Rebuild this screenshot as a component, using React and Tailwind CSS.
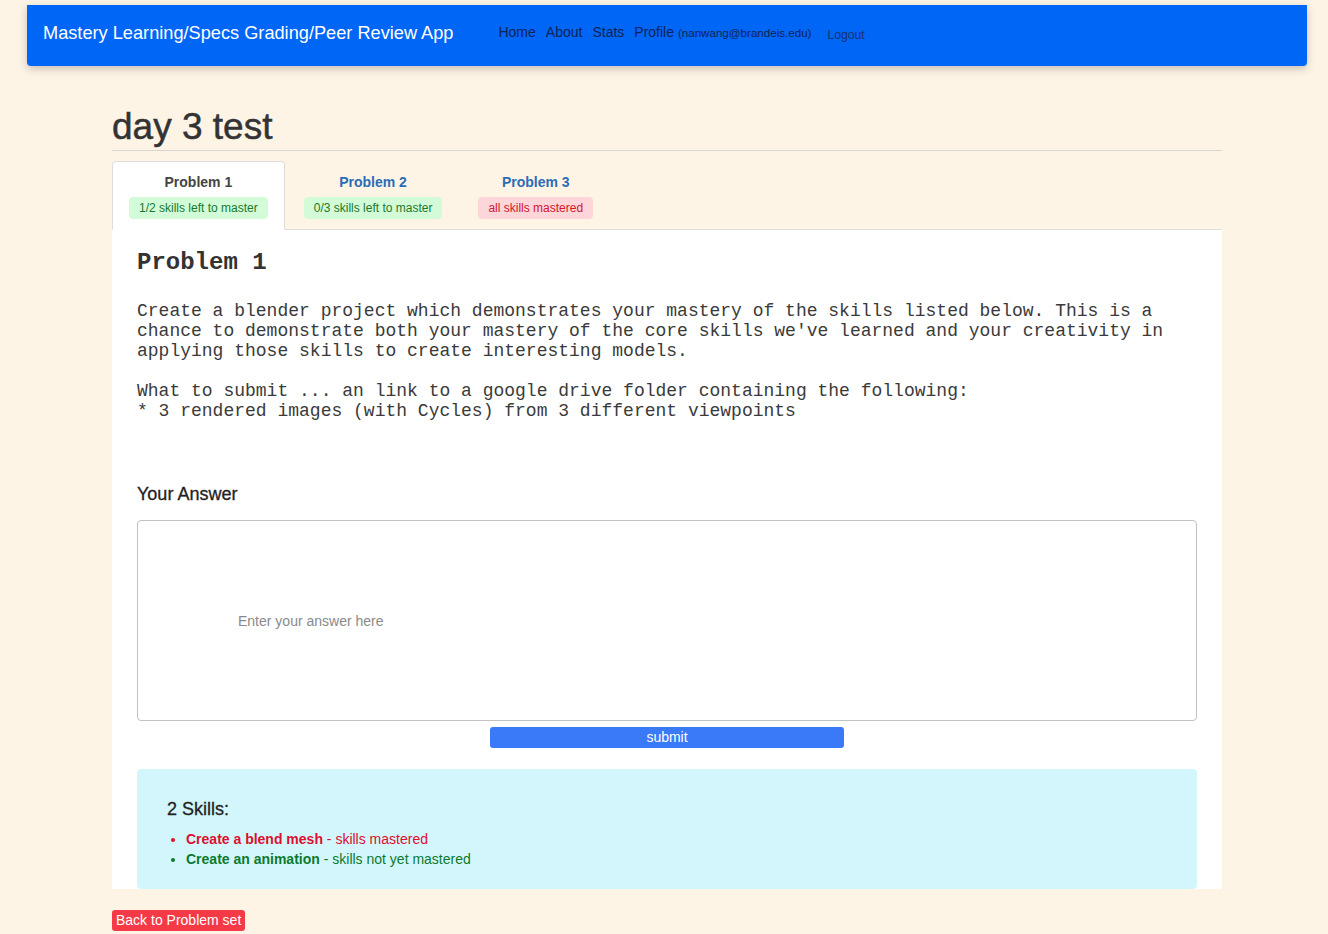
import React from "react";

const sans = { fontFamily: '"Liberation Sans", Arial, sans-serif' };
const mono = { fontFamily: '"Liberation Mono", "Courier New", monospace' };

function Tab({ label, badge, active, tone }) {
  const badgeCls =
    tone === "red"
      ? "bg-[#fdd6da] text-[#d3152b]"
      : "bg-[#d3fbd8] text-[#187a2c]";
  return (
    <div
      className={
        "flex flex-col items-center px-4 pt-[10px] h-[69px] mr-[2px] -mb-px rounded-t-[4px] border " +
        (active
          ? "bg-white border-[#dddddd] border-b-white"
          : "border-transparent")
      }
    >
      <div
        className={
          "text-[14px] leading-[20px] font-bold " +
          (active ? "text-[#444444]" : "text-[#2b6db5]")
        }
      >
        {label}
      </div>
      <div
        className={
          "mt-[5px] h-[22px] flex items-center px-[10px] rounded-[4px] text-[12px] " +
          badgeCls
        }
      >
        {badge}
      </div>
    </div>
  );
}

export default function App() {
  return (
    <div className="min-h-[934px] bg-[#fef4e6] pt-[5px] pb-[4px]" style={sans}>
      <nav className="ml-[27px] w-[1280px] h-[61px] bg-[#0066f5] rounded-b-[4px] shadow-[0_3px_8px_rgba(0,0,0,0.22)] flex items-center pl-[16px]">
        <div className="text-white text-[18.2px] leading-none -mt-[4px]">
          Mastery Learning/Specs Grading/Peer Review App
        </div>
        <div className="ml-[45px] flex items-center gap-[10px] text-[14px] text-[#0f2356] -mt-[6px]">
          <span>Home</span>
          <span>About</span>
          <span>Stats</span>
          <span>
            Profile{" "}
            <span className="text-[11.6px]">(nanwang@brandeis.edu)</span>
          </span>
          <span className="ml-[6px] text-[12.2px] text-[#18326e] mt-[6px]">
            Logout
          </span>
        </div>
      </nav>

      <div className="ml-[112px] w-[1110px]">
        <h1 className="mt-[39px] text-[37px] leading-[44px] font-medium text-[#333333] [-webkit-text-stroke:0.5px_#333333]">
          day 3 test
        </h1>
        <div className="mt-[1px] border-t border-[#d9d5cf]" />

        <div className="mt-[10px] flex border-b border-[#dddddd]">
          <Tab label="Problem 1" badge="1/2 skills left to master" active />
          <Tab label="Problem 2" badge="0/3 skills left to master" />
          <Tab label="Problem 3" badge="all skills mastered" tone="red" />
        </div>

        <div className="bg-white px-[25px] pt-[19px]">
          <h3 className="text-[24px] leading-[28px] font-bold text-[#333333]" style={mono}>
            Problem 1
          </h3>
          <div
            className="mt-[24px] text-[18px] leading-[20px] text-[#3a3a3a] whitespace-pre"
            style={mono}
          >
            {"Create a blender project which demonstrates your mastery of the skills listed below. This is a\nchance to demonstrate both your mastery of the core skills we've learned and your creativity in\napplying those skills to create interesting models.\n\nWhat to submit ... an link to a google drive folder containing the following:\n* 3 rendered images (with Cycles) from 3 different viewpoints"}
          </div>

          <div className="mt-[61px] text-[18px] leading-[24px] font-medium text-[#222222] [-webkit-text-stroke:0.3px_#222222]">
            Your Answer
          </div>
          <textarea
            className="mt-[14px] block w-full h-[201px] border border-[#c2c2c2] rounded-[4px] pl-[100px] pt-[91px] text-[14px] leading-[18px] resize-none outline-none placeholder:text-[#8a8a8a]"
            style={sans}
            placeholder="Enter your answer here"
          />
          <div className="flex justify-center mt-[6px]">
            <button className="w-[354px] h-[21px] bg-[#3a79f8] rounded-[3px] text-white text-[14px] leading-[21px]">
              submit
            </button>
          </div>

          <div className="mt-[21px] bg-[#d3f6fd] rounded-[4px] pl-[30px] pt-[28px] pb-[20px]">
            <div className="text-[18px] leading-[24px] text-[#222222] font-medium [-webkit-text-stroke:0.3px_#222222]">
              2 Skills:
            </div>
            <ul className="mt-[8px] text-[14px] leading-[20px] list-disc pl-[19px]">
              <li className="text-[#dc102c] marker:text-[#dc102c]">
                <b>Create a blend mesh</b> - skills mastered
              </li>
              <li className="text-[#0b7a2c] marker:text-[#0b7a2c]">
                <b>Create an animation</b> - skills not yet mastered
              </li>
            </ul>
          </div>
        </div>

        <button className="mt-[21px] h-[21px] px-[4px] bg-[#f53a47] rounded-[3px] text-white text-[14px] leading-[21px]">
          Back to Problem set
        </button>
      </div>
    </div>
  );
}
